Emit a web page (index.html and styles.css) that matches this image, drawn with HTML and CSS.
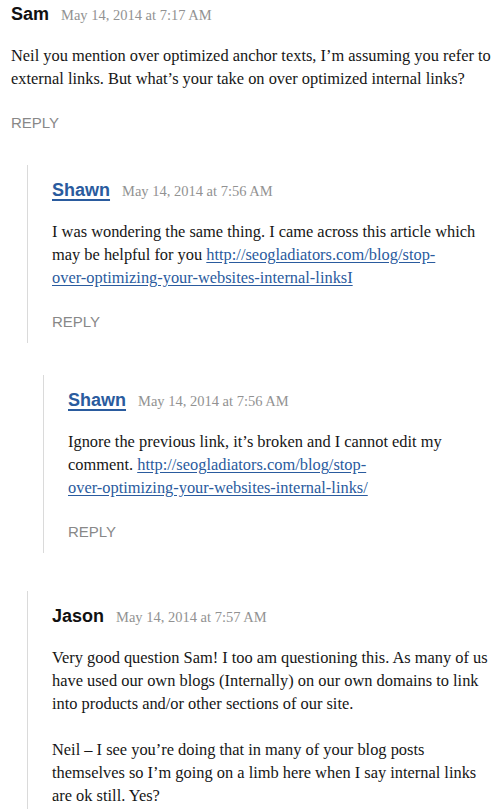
FILE: index.html
```html
<!DOCTYPE html>
<html lang="en">
<head>
<meta charset="utf-8">
<title>Comments</title>
<link rel="stylesheet" href="styles.css">
</head>
<body>
<ol class="comment-list">
  <li class="comment">
    <article class="comment-body comment-body--top">
      <header class="comment-meta">
        <span class="comment-author">Sam</span>
        <time class="comment-date">May 14, 2014 at 7:17 AM</time>
      </header>
      <div class="comment-content">
        <p>Neil you mention over optimized anchor texts, I’m assuming you refer to external links. But what’s your take on over optimized internal links?</p>
      </div>
      <a class="reply-link" href="#">Reply</a>
    </article>
    <ol class="children">
      <li class="comment">
        <article class="comment-body">
          <header class="comment-meta">
            <a class="comment-author comment-author--link" href="#">Shawn</a>
            <time class="comment-date">May 14, 2014 at 7:56 AM</time>
          </header>
          <div class="comment-content">
            <p>I was wondering the same thing. I came across this article which may be helpful for you <a href="#">http://seogladiators.com/blog/stop-<span class="nobreak">over-optimizing-your-websites-internal-linksI</span></a></p>
          </div>
          <a class="reply-link" href="#">Reply</a>
        </article>
        <ol class="children">
          <li class="comment">
            <article class="comment-body">
              <header class="comment-meta">
                <a class="comment-author comment-author--link" href="#">Shawn</a>
                <time class="comment-date">May 14, 2014 at 7:56 AM</time>
              </header>
              <div class="comment-content">
                <p>Ignore the previous link, it’s broken and I cannot edit my comment. <a href="#">http://seogladiators.com/blog/stop-<span class="nobreak">over-optimizing-your-websites-internal-links/</span></a></p>
              </div>
              <a class="reply-link" href="#">Reply</a>
            </article>
          </li>
        </ol>
      </li>
      <li class="comment">
        <article class="comment-body">
          <header class="comment-meta">
            <span class="comment-author">Jason</span>
            <time class="comment-date">May 14, 2014 at 7:57 AM</time>
          </header>
          <div class="comment-content">
            <p>Very good question Sam! I too am questioning this. As many of us have used our own blogs (Internally) on our own domains to link into products and/or other sections of our site.</p>
            <p>Neil – I see you’re doing that in many of your blog posts themselves so I’m going on a limb here when I say internal links are ok still. Yes?</p>
          </div>
          <a class="reply-link" href="#">Reply</a>
        </article>
      </li>
    </ol>
  </li>
</ol>
</body>
</html>
```

FILE: styles.css
```css
html, body {
  margin: 0;
  padding: 0;
  background: #fff;
}

body {
  font-family: "Liberation Serif", "Times New Roman", serif;
  color: #161616;
  overflow: hidden;
}

.comment-list,
.children {
  list-style: none;
  margin: 0;
  padding: 0;
}

.comment-list {
  padding: 0 11px;
}

.children {
  margin-top: 32px;
  margin-left: 16px;
}

.children > .comment + .comment {
  margin-top: 38px;
}

.comment-body {
  border-left: 1px solid #dadada;
  padding: 13px 0 11px 24px;
}

.comment-body--top {
  border-left: 0;
  padding: 2px 0 0 0;
}

.comment-meta {
  display: flex;
  align-items: baseline;
  gap: 12px;
  line-height: 24px;
}

.comment-author {
  font-family: "Liberation Sans", Arial, sans-serif;
  font-weight: bold;
  font-size: 18px;
  color: #111;
  text-decoration: none;
}

.comment-author--link {
  color: #2a5b9e;
  text-decoration: underline;
  text-decoration-thickness: 2px;
  text-underline-offset: 3px;
}

.comment-date {
  font-size: 14.5px;
  color: #929292;
}

.comment-content {
  margin-top: 17px;
  font-size: 16.4px;
  line-height: 23px;
}

.comment-content p {
  margin: 0;
}

.comment-content p + p {
  margin-top: 23px;
}

.comment-content a {
  color: #2a5b9e;
  text-decoration: underline;
  text-underline-offset: 2px;
}

.nobreak {
  white-space: nowrap;
}

.reply-link {
  display: block;
  margin-top: 23px;
  font-family: "Liberation Sans", Arial, sans-serif;
  font-size: 15px;
  line-height: 20px;
  text-transform: uppercase;
  color: #888;
  text-decoration: none;
}
```
